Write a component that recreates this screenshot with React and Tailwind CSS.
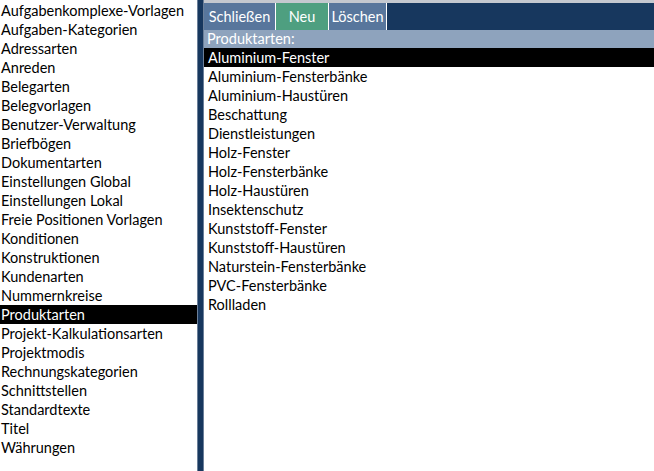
import React, { useState } from 'react';

const sections = [
    'Aufgabenkomplexe-Vorlagen',
    'Aufgaben-Kategorien',
    'Adressarten',
    'Anreden',
    'Belegarten',
    'Belegvorlagen',
    'Benutzer-Verwaltung',
    'Briefbögen',
    'Dokumentarten',
    'Einstellungen Global',
    'Einstellungen Lokal',
    'Freie Positionen Vorlagen',
    'Konditionen',
    'Konstruktionen',
    'Kundenarten',
    'Nummernkreise',
    'Produktarten',
    'Projekt-Kalkulationsarten',
    'Projektmodis',
    'Rechnungskategorien',
    'Schnittstellen',
    'Standardtexte',
    'Titel',
    'Währungen',
];

const produktarten = [
    'Aluminium-Fenster',
    'Aluminium-Fensterbänke',
    'Aluminium-Haustüren',
    'Beschattung',
    'Dienstleistungen',
    'Holz-Fenster',
    'Holz-Fensterbänke',
    'Holz-Haustüren',
    'Insektenschutz',
    'Kunststoff-Fenster',
    'Kunststoff-Haustüren',
    'Naturstein-Fensterbänke',
    'PVC-Fensterbänke',
    'Rollladen',
];

export default function App() {
    const [section, setSection] = useState('Produktarten');
    const [selected, setSelected] = useState('Aluminium-Fenster');

    return (
        <div
            className="flex h-[471px] w-[654px] overflow-hidden bg-white text-[14.5px] text-black"
            style={{ fontFamily: 'Lato, "Open Sans", sans-serif' }}
        >
            {/* left: Stammdaten sections */}
            <ul className="w-[197px] shrink-0 pt-[1px]">
                {sections.map((s) => (
                    <li
                        key={s}
                        onClick={() => setSection(s)}
                        className={`h-[19px] cursor-default truncate pl-[1px] leading-[19px] ${
                            s === section ? 'bg-black text-white' : ''
                        }`}
                    >
                        {s}
                    </li>
                ))}
            </ul>

            {/* divider */}
            <div className="w-[7px] shrink-0 border-x border-[#6b7f99] bg-[#17375e]" />

            <div className="flex flex-1 flex-col">
                <div className="h-[3px] bg-[#c4c8cf]" />
                <div className="flex h-[27px] bg-[#17375e] text-white">
                    <button className="w-[72px] border-r border-white bg-[#58769c]">Schließen</button>
                    <button className="w-[53px] border-r border-white bg-[#4e9f80]">Neu</button>
                    <button className="w-[58px] border-r border-white bg-[#58769c]">Löschen</button>
                </div>
                <div className="h-[18px] bg-[#8ea3bd] pl-[3px] leading-[17px] text-white">Produktarten:</div>
                <ul>
                    {produktarten.map((p) => (
                        <li
                            key={p}
                            onClick={() => setSelected(p)}
                            className={`h-[19px] cursor-default pl-[4px] leading-[19px] ${
                                p === selected ? 'bg-black text-white' : ''
                            }`}
                        >
                            {p}
                        </li>
                    ))}
                </ul>
            </div>
        </div>
    );
}
